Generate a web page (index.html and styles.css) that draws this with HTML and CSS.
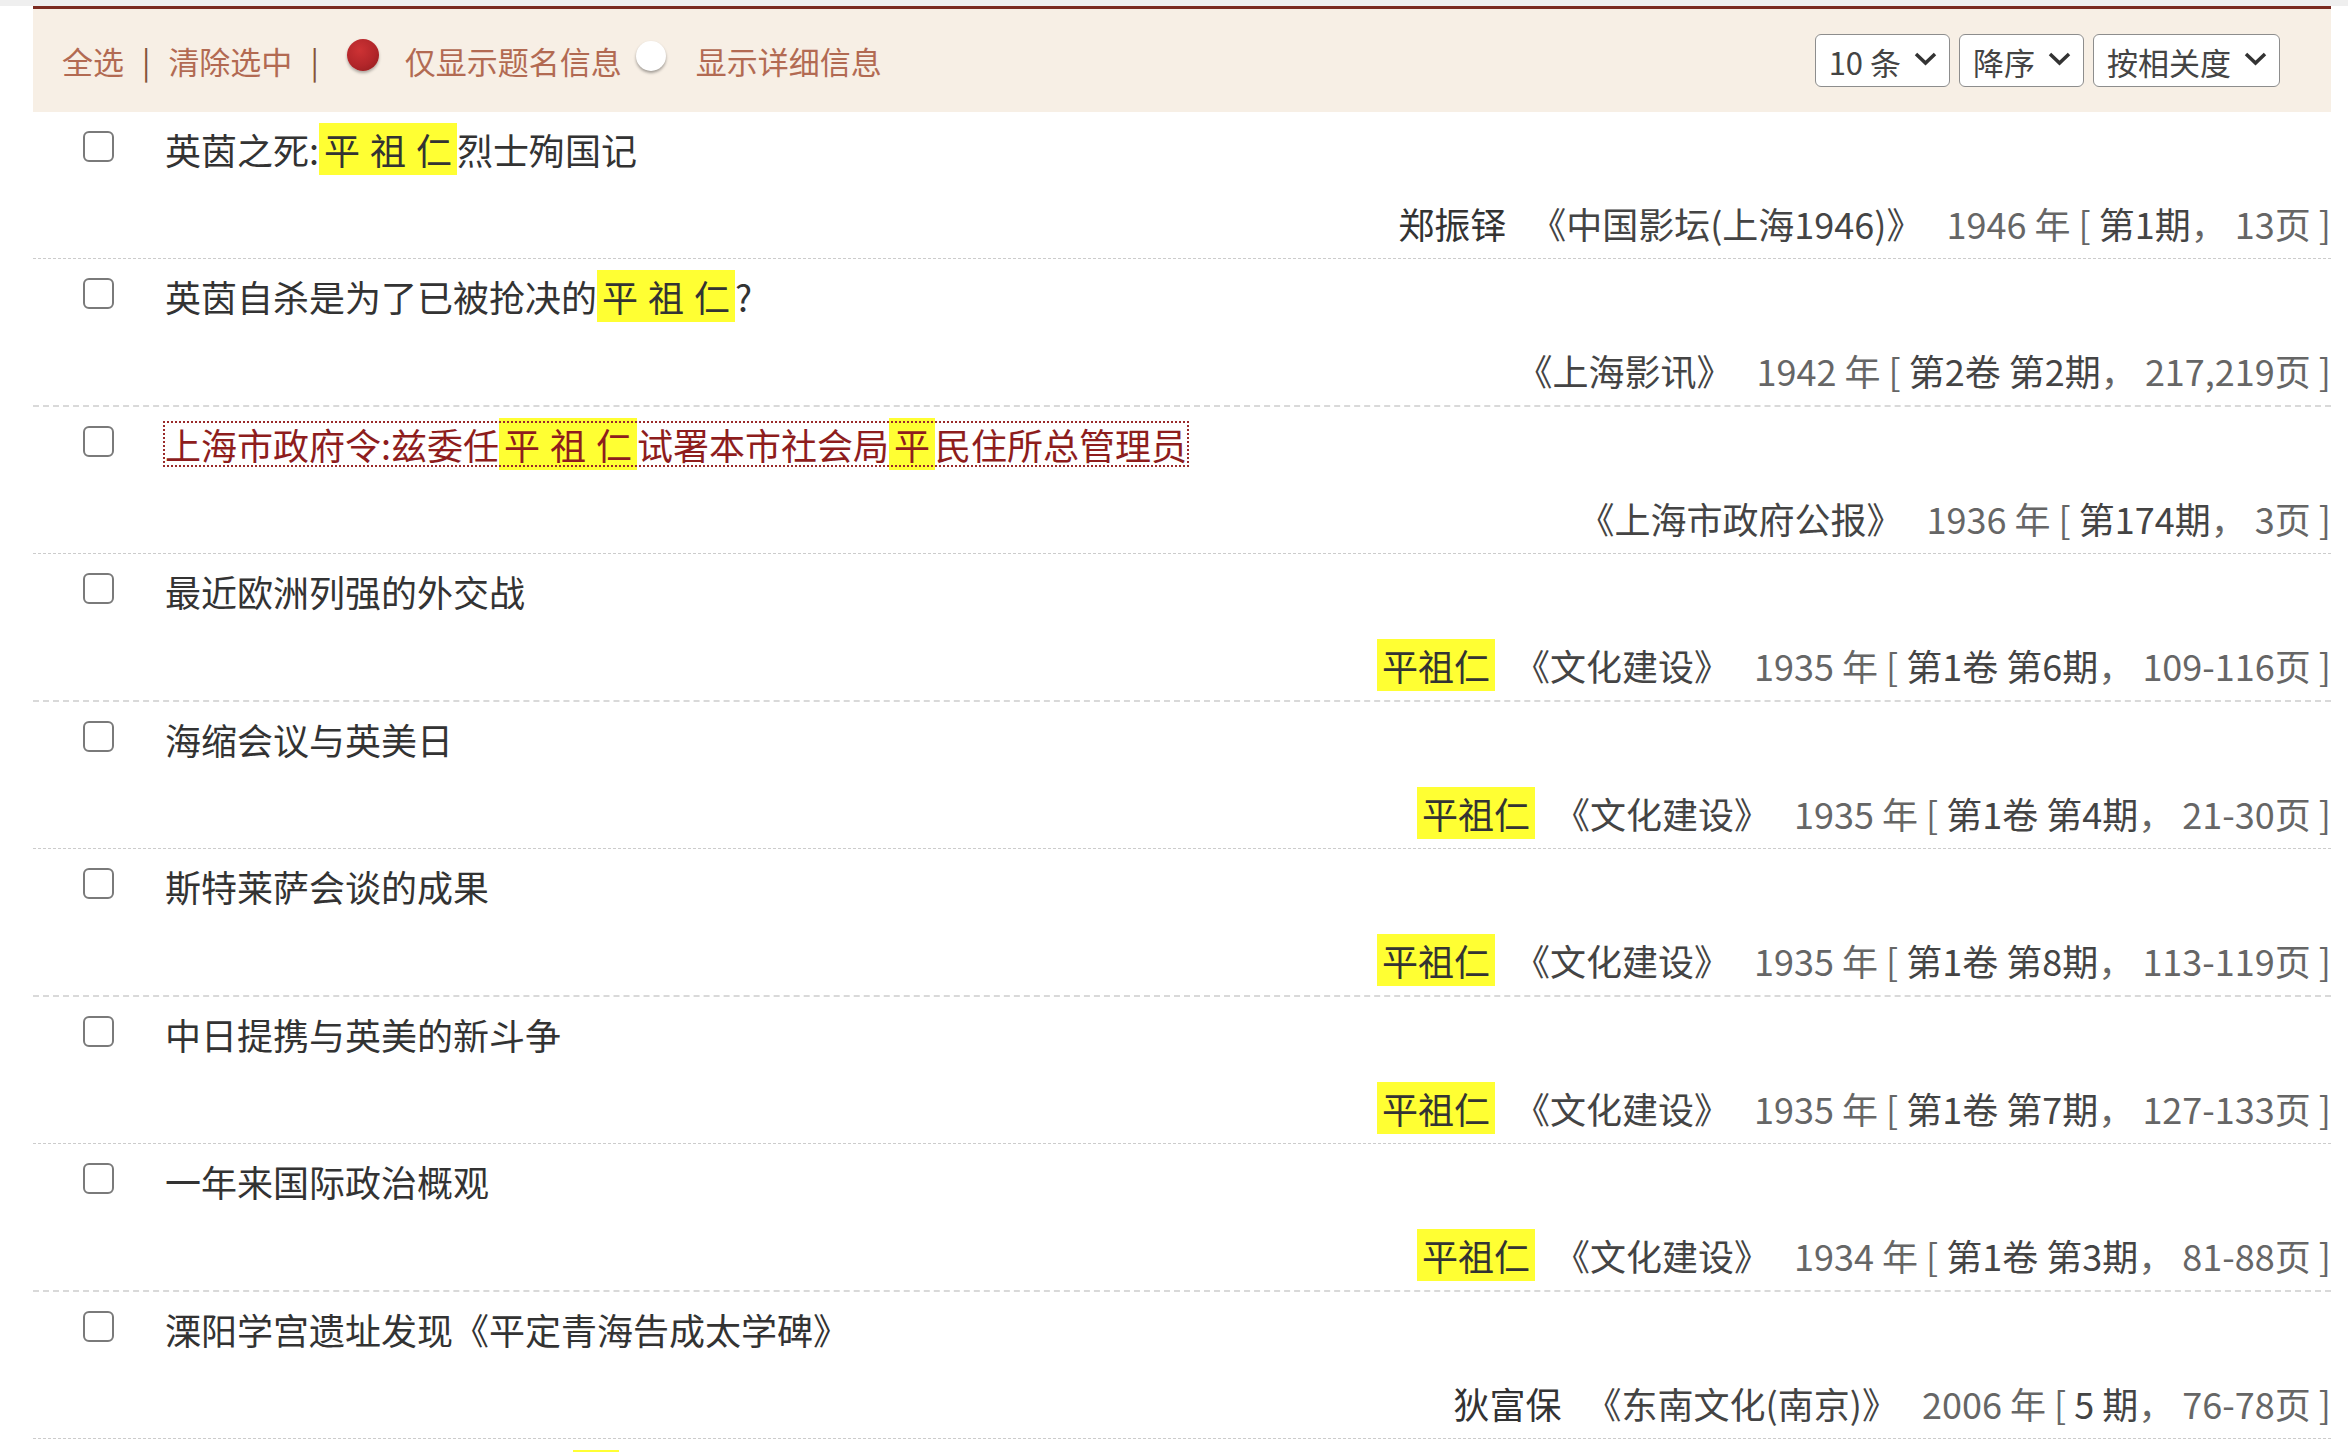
FILE: index.html
```html
<!DOCTYPE html>
<html lang="zh-CN">
<head>
  <meta charset="UTF-8">
  <title>检索结果</title>
  <link rel="stylesheet" href="styles.css">
</head>
<body>

  <div class="topline"></div>

  <div class="result">
    <div class="toolbar">
      <div class="tools-left">
        <a class="op">全选</a><span class="sep">|</span><a class="op">清除选中</a><span class="sep">|</span>
        <span class="radio on"></span><a class="op">仅显示题名信息</a>
        <span class="radio off"></span><a class="op">显示详细信息</a>
      </div>
      <div class="tools-right">
        <div class="select"><span>10 条</span><svg width="23" height="15" viewBox="0 0 23 15"><polyline points="2,3 11.5,12 21,3" /></svg></div>
        <div class="select"><span>降序</span><svg width="23" height="15" viewBox="0 0 23 15"><polyline points="2,3 11.5,12 21,3" /></svg></div>
        <div class="select"><span>按相关度</span><svg width="23" height="15" viewBox="0 0 23 15"><polyline points="2,3 11.5,12 21,3" /></svg></div>
      </div>
    </div>

    <ul class="list">
      <li class="item">
        <div class="title-line"><span class="check"></span><a class="title">英茵之死:<em class="hl">平</em><em class="hl">祖</em><em class="hl">仁</em>烈士殉国记</a></div>
        <div class="meta"><span class="author">郑振铎</span><span class="source">《中国影坛(上海1946)》</span><span class="issue">1946 年 [ <b>第1期</b>， 13页 ]</span></div>
      </li>
      <li class="item">
        <div class="title-line"><span class="check"></span><a class="title">英茵自杀是为了已被抢决的<em class="hl">平</em><em class="hl">祖</em><em class="hl">仁</em>?</a></div>
        <div class="meta"><span class="source">《上海影讯》</span><span class="issue">1942 年 [ <b>第2卷 第2期</b>， 217,219页 ]</span></div>
      </li>
      <li class="item">
        <div class="title-line"><span class="check"></span><a class="title visited">上海市政府令:兹委任<em class="hl">平</em><em class="hl">祖</em><em class="hl">仁</em>试署本市社会局<em class="hl">平</em>民住所总管理员</a></div>
        <div class="meta"><span class="source">《上海市政府公报》</span><span class="issue">1936 年 [ <b>第174期</b>， 3页 ]</span></div>
      </li>
      <li class="item">
        <div class="title-line"><span class="check"></span><a class="title">最近欧洲列强的外交战</a></div>
        <div class="meta"><span class="author hl-name">平祖仁</span><span class="source">《文化建设》</span><span class="issue">1935 年 [ <b>第1卷 第6期</b>， 109-116页 ]</span></div>
      </li>
      <li class="item">
        <div class="title-line"><span class="check"></span><a class="title">海缩会议与英美日</a></div>
        <div class="meta"><span class="author hl-name">平祖仁</span><span class="source">《文化建设》</span><span class="issue">1935 年 [ <b>第1卷 第4期</b>， 21-30页 ]</span></div>
      </li>
      <li class="item">
        <div class="title-line"><span class="check"></span><a class="title">斯特莱萨会谈的成果</a></div>
        <div class="meta"><span class="author hl-name">平祖仁</span><span class="source">《文化建设》</span><span class="issue">1935 年 [ <b>第1卷 第8期</b>， 113-119页 ]</span></div>
      </li>
      <li class="item">
        <div class="title-line"><span class="check"></span><a class="title">中日提携与英美的新斗争</a></div>
        <div class="meta"><span class="author hl-name">平祖仁</span><span class="source">《文化建设》</span><span class="issue">1935 年 [ <b>第1卷 第7期</b>， 127-133页 ]</span></div>
      </li>
      <li class="item">
        <div class="title-line"><span class="check"></span><a class="title">一年来国际政治概观</a></div>
        <div class="meta"><span class="author hl-name">平祖仁</span><span class="source">《文化建设》</span><span class="issue">1934 年 [ <b>第1卷 第3期</b>， 81-88页 ]</span></div>
      </li>
      <li class="item">
        <div class="title-line"><span class="check"></span><a class="title">溧阳学宫遗址发现《平定青海告成太学碑》</a></div>
        <div class="meta"><span class="author">狄富保</span><span class="source">《东南文化(南京)》</span><span class="issue">2006 年 [ <b>5 期</b>， 76-78页 ]</span></div>
      </li>
      <li class="item peek">
        <div class="title-line"><span class="spacer"></span><em class="hl">平</em></div>
      </li>
    </ul>
  </div>

</body>
</html>
```

FILE: styles.css
```css
* {
  box-sizing: border-box;
}

body {
  margin: 0;
  padding: 0;
  background: #ffffff;
  font-family: "Noto Sans CJK SC", "Noto Sans", sans-serif;
  color: #333;
}

.topline {
  height: 6px;
  background: #efefef;
}

.result {
  margin-left: 33px;
  width: 2298px;
  border-top: 3px solid #7b2b22;
}

/* toolbar */
.toolbar {
  height: 103px;
  background: #f7efe5;
  display: flex;
  align-items: center;
  justify-content: space-between;
  padding: 0 51px 0 29px;
}

.tools-left {
  display: flex;
  align-items: center;
  font-size: 31px;
}

.op {
  color: #b26a52;
  cursor: pointer;
}

.sep {
  color: #84543a;
  margin: 0 18px;
}

.radio {
  display: inline-block;
  border-radius: 50%;
}

.radio.on {
  width: 32px;
  height: 32px;
  margin: 0 26px 12px 10px;
  background: radial-gradient(circle at 40% 35%, #cd3234 0%, #b2262a 55%, #8c1b1d 100%);
  box-shadow: 0 2px 3px rgba(0, 0, 0, 0.3);
}

.radio.off {
  width: 30px;
  height: 30px;
  margin: 0 30px 10px 14px;
  background: #ffffff;
  box-shadow: 0 2px 3px rgba(0, 0, 0, 0.35);
}

.tools-right {
  display: flex;
  gap: 9px;
}

.select {
  height: 53px;
  display: flex;
  align-items: center;
  gap: 13px;
  padding: 2px 12px 0 13px;
  background: #ffffff;
  border: 1.5px solid #8d8d8d;
  border-radius: 6px;
  font-size: 31px;
  color: #444;
}

.select svg {
  margin-top: -6px;
}

.select polyline {
  fill: none;
  stroke: #333;
  stroke-width: 3.5;
}

/* list */
.list {
  list-style: none;
  margin: 0;
  padding: 0;
}

.item {
  padding: 11px 0 9px 0;
  font-size: 36px;
}

.item:nth-child(odd) {
  border-bottom: 1px dashed #cccccc;
}

.item:nth-child(even) {
  border-bottom: 2px dashed #d9d9d9;
}

.title-line {
  display: flex;
  align-items: flex-start;
  padding-left: 50px;
  line-height: 52px;
  height: 52px;
}

.check {
  width: 31px;
  height: 31px;
  margin-top: 8px;
  border: 2px solid #7a7a7a;
  border-radius: 6px;
  background: #ffffff;
  flex-shrink: 0;
}

.title {
  margin-left: 51px;
  color: #333;
  white-space: nowrap;
}

.title.visited {
  color: #8e1d1d;
  display: inline-block;
  line-height: 42px;
  margin-top: 5px;
  outline: 2px dotted #9a2a2a;
}

.hl {
  font-style: normal;
  background: #ffff33;
  padding: 0 5px;
}

.peek .spacer {
  width: 490px;
}

.peek .hl {
  color: transparent;
}

.meta {
  margin-top: 22px;
  line-height: 52px;
  text-align: right;
  white-space: nowrap;
}

.author {
  color: #333;
  margin-right: 24px;
}

.hl-name {
  background: #ffff33;
  padding: 0 5px;
  margin-right: 19px;
}

.source {
  color: #444;
  margin-right: 24px;
}

.issue {
  color: #666;
}

.issue b {
  font-weight: normal;
  color: #444;
}
```
